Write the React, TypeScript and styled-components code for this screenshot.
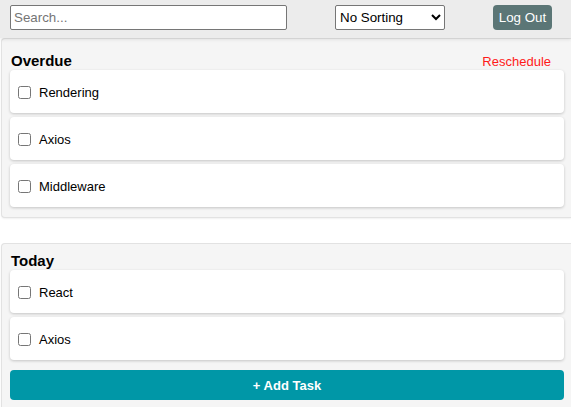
import React, { useState } from 'react';
import styled, { createGlobalStyle } from 'styled-components';

type Task = {
  id: number;
  title: string;
};

const overdueTasks: Task[] = [
  { id: 1, title: 'Rendering' },
  { id: 2, title: 'Axios' },
  { id: 3, title: 'Middleware' }
];

const todayTasks: Task[] = [
  { id: 4, title: 'React' },
  { id: 5, title: 'Axios' }
];

const GlobalStyle = createGlobalStyle`
  body {
    margin: 0;
    background: #fff;
    font-family: 'Liberation Sans', Arial, sans-serif;
    color: #000;
  }
`;

const Header = styled.header`
  position: relative;
  z-index: 1;
  display: flex;
  align-items: center;
  justify-content: space-between;
  height: 38px;
  box-sizing: border-box;
  padding: 0 19px 3px 10px;
  background: #ececec;
  box-shadow: 0 2px 3px rgba(0, 0, 0, 0.08);
`;

const SearchInput = styled.input`
  width: 277px;
  height: 25px;
  box-sizing: border-box;
  padding: 1px 3px;
  border: 1px solid #767676;
  border-radius: 2px;
  font-family: 'Liberation Sans', Arial, sans-serif;
  font-size: 13.33px;
  &::placeholder {
    color: #757575;
  }
`;

const SortSelect = styled.select`
  width: 110px;
  height: 25px;
  box-sizing: border-box;
  border: 1px solid #767676;
  border-radius: 2px;
  background: #fff;
  font-family: 'Liberation Sans', Arial, sans-serif;
  font-size: 13.33px;
  color: #000;
`;

const LogOutButton = styled.button`
  width: 59px;
  height: 25px;
  padding: 0;
  border: none;
  border-radius: 4px;
  background: #5b7676;
  color: #fff;
  font-family: 'Liberation Sans', Arial, sans-serif;
  font-size: 13.33px;
`;

const Section = styled.section<{ $first?: boolean }>`
  margin: ${(p) => (p.$first ? '0' : '25px')} 0 0 1px;
  padding: ${(p) => (p.$first ? '13px' : '8px')} 7px 10px 8px;
  background: #f5f5f5;
  border: 1px solid #e2e2e2;
  border-right: none;
  border-radius: 4px 0 0 4px;
  box-shadow: 0 1px 2px rgba(0, 0, 0, 0.06);
`;

const SectionHead = styled.div`
  display: flex;
  align-items: center;
  justify-content: space-between;
  height: 18px;
  padding: 0 13px 0 1px;
`;

const SectionTitle = styled.h2`
  margin: 0;
  font-size: 15px;
  font-weight: bold;
  line-height: 18px;
`;

const Reschedule = styled.span`
  color: #ff1a1a;
  font-size: 13px;
  cursor: pointer;
`;

const TaskList = styled.div`
  display: flex;
  flex-direction: column;
  gap: 4px;
`;

const TaskCard = styled.label`
  display: flex;
  align-items: center;
  gap: 8px;
  height: 43px;
  padding: 1px 0 0 8px;
  box-sizing: border-box;
  background: #fff;
  border-radius: 4px;
  box-shadow: 0 1px 3px rgba(0, 0, 0, 0.2);
  font-size: 13px;
`;

const Check = styled.input`
  width: 13px;
  height: 13px;
  margin: 0;
`;

const AddTaskButton = styled.button`
  width: 100%;
  height: 30px;
  margin-top: 10px;
  border: none;
  border-radius: 4px;
  background: #0097a7;
  color: #fff;
  font-family: 'Liberation Sans', Arial, sans-serif;
  font-size: 13px;
  font-weight: bold;
`;

function App() {
  const [search, setSearch] = useState('');

  return (
    <>
      <GlobalStyle />
      <Header>
        <SearchInput
          placeholder='Search...'
          value={search}
          onChange={(e) => setSearch(e.target.value)}
        />
        <SortSelect defaultValue='none'>
          <option value='none'>No Sorting</option>
          <option value='asc'>Ascending</option>
          <option value='desc'>Descending</option>
        </SortSelect>
        <LogOutButton>Log Out</LogOutButton>
      </Header>
      <Section $first>
        <SectionHead>
          <SectionTitle>Overdue</SectionTitle>
          <Reschedule>Reschedule</Reschedule>
        </SectionHead>
        <TaskList>
          {overdueTasks.map((task) => (
            <TaskCard key={task.id}>
              <Check type='checkbox' />
              {task.title}
            </TaskCard>
          ))}
        </TaskList>
      </Section>
      <Section>
        <SectionHead>
          <SectionTitle>Today</SectionTitle>
        </SectionHead>
        <TaskList>
          {todayTasks.map((task) => (
            <TaskCard key={task.id}>
              <Check type='checkbox' />
              {task.title}
            </TaskCard>
          ))}
        </TaskList>
        <AddTaskButton>+ Add Task</AddTaskButton>
      </Section>
    </>
  );
}

export default App;
